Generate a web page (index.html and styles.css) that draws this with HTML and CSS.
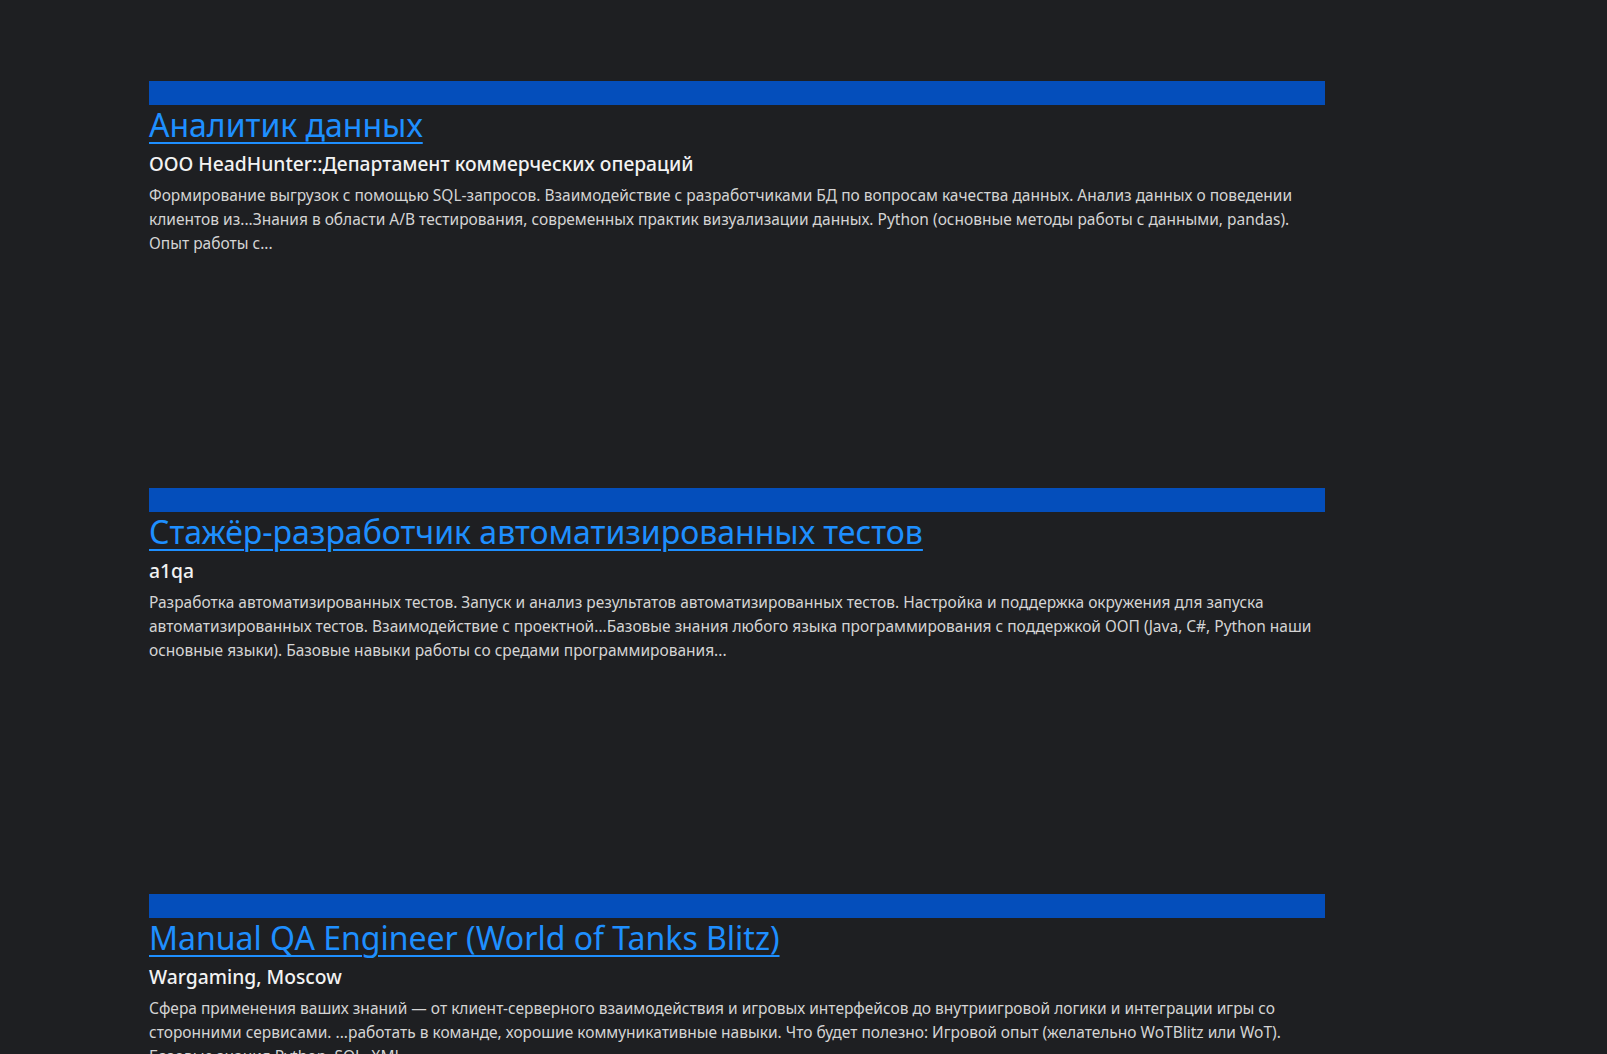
FILE: index.html
```html
<!DOCTYPE html>
<html lang="ru">
<head>
<meta charset="utf-8">
<title>Вакансии</title>
<link rel="stylesheet" href="styles.css">
</head>
<body>
<main class="list">
  <article class="card">
    <div class="card-bar"></div>
    <h2 class="card-title"><a href="#">Аналитик данных</a></h2>
    <h3 class="card-company">ООО HeadHunter::Департамент коммерческих операций</h3>
    <p class="card-desc">Формирование выгрузок с помощью SQL-запросов. Взаимодействие с разработчиками БД по вопросам качества данных. Анализ данных о поведении клиентов из...Знания в области A/B тестирования, современных практик визуализации данных. Python (основные методы работы с данными, pandas). Опыт работы с...</p>
  </article>
  <article class="card">
    <div class="card-bar"></div>
    <h2 class="card-title"><a href="#">Стажёр-разработчик автоматизированных тестов</a></h2>
    <h3 class="card-company">a1qa</h3>
    <p class="card-desc">Разработка автоматизированных тестов. Запуск и анализ результатов автоматизированных тестов. Настройка и поддержка окружения для запуска автоматизированных тестов. Взаимодействие с проектной...Базовые знания любого языка программирования с поддержкой ООП (Java, C#, Python наши основные языки). Базовые навыки работы со средами программирования...</p>
  </article>
  <article class="card">
    <div class="card-bar"></div>
    <h2 class="card-title"><a href="#">Manual QA Engineer (World of Tanks Blitz)</a></h2>
    <h3 class="card-company">Wargaming, Moscow</h3>
    <p class="card-desc">Сфера применения ваших знаний — от клиент-серверного взаимодействия и игровых интерфейсов до внутриигровой логики и интеграции игры со сторонними сервисами. ...работать в команде, хорошие коммуникативные навыки. Что будет полезно: Игровой опыт (желательно WoTBlitz или WoT). Базовые знания Python, SQL, XML...</p>
  </article>
</main>
</body>
</html>
```
FILE: styles.css
```css
html, body {
  margin: 0;
  padding: 0;
  background: #1e1f22;
}

body {
  font-family: "Noto Sans", "Open Sans", sans-serif;
  color: #d2d2d2;
}

.list {
  width: 1176px;
  padding: 81px 0 0 149px;
  display: flex;
  flex-direction: column;
}

.card {
  height: 406.5px;
  flex: none;
  display: flex;
  flex-direction: column;
}

.card-bar {
  height: 24px;
  background: #044ebb;
}

.card-title {
  margin: 0;
  padding-top: 1px;
  font-size: 32px;
  font-weight: 400;
  line-height: 38px;
}

.card-title a {
  color: #1e8fff;
  text-decoration: underline;
  text-decoration-thickness: 1.5px;
  text-underline-offset: 5px;
}

.card-company {
  margin: 7px 0 0;
  font-size: 19.3px;
  font-weight: 500;
  line-height: 26px;
  color: #f2f2f2;
}

.card-desc {
  margin: 6px 0 0;
  font-size: 15.5px;
  line-height: 24px;
  color: #d4d4d4;
}
```
